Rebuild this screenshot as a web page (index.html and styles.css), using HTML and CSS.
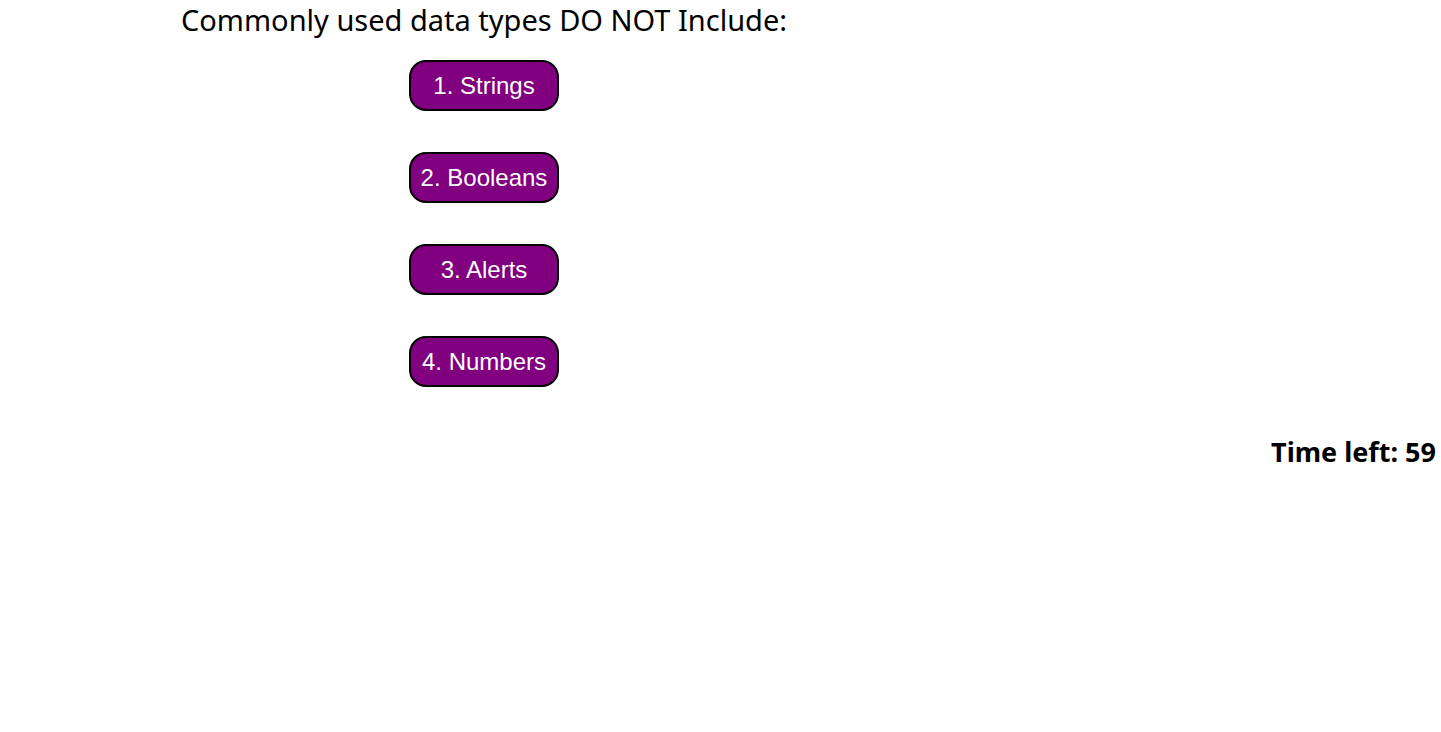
FILE: index.html
```html
<!DOCTYPE html>
<html lang="en">
<head>
<meta charset="utf-8">
<title>Quiz</title>
<link rel="stylesheet" href="styles.css">
</head>
<body>
<main class="quiz">
  <h1 class="question">Commonly used data types DO NOT Include:</h1>
  <div class="answers">
    <button class="answer">1. Strings</button>
    <button class="answer">2. Booleans</button>
    <button class="answer">3. Alerts</button>
    <button class="answer">4. Numbers</button>
  </div>
  <p class="timer">Time left: 59</p>
</main>
</body>
</html>
```
FILE: styles.css
```css
html, body {
  margin: 0;
  padding: 0;
  background: #ffffff;
}
body {
  font-family: "Noto Sans", "Open Sans", sans-serif;
  color: #000;
}
.quiz {
  display: flex;
  flex-direction: column;
}
.question {
  margin: 0;
  padding-left: 181px;
  font-size: 29px;
  font-weight: 400;
  line-height: 39px;
}
.answers {
  display: flex;
  flex-direction: column;
  align-items: flex-start;
  gap: 41px;
  padding-left: 409px;
  margin-top: 21px;
}
.answer {
  width: 150px;
  height: 51px;
  box-sizing: border-box;
  background: #800080;
  color: #fff;
  border: 2px solid #000;
  border-radius: 17px;
  font-family: "Liberation Sans", Arial, sans-serif;
  font-size: 24px;
  padding: 0;
  text-align: center;
}
.timer {
  margin: 48px 5px 0 0;
  text-align: right;
  font-size: 27px;
  font-weight: 700;
  line-height: 34px;
}
```
